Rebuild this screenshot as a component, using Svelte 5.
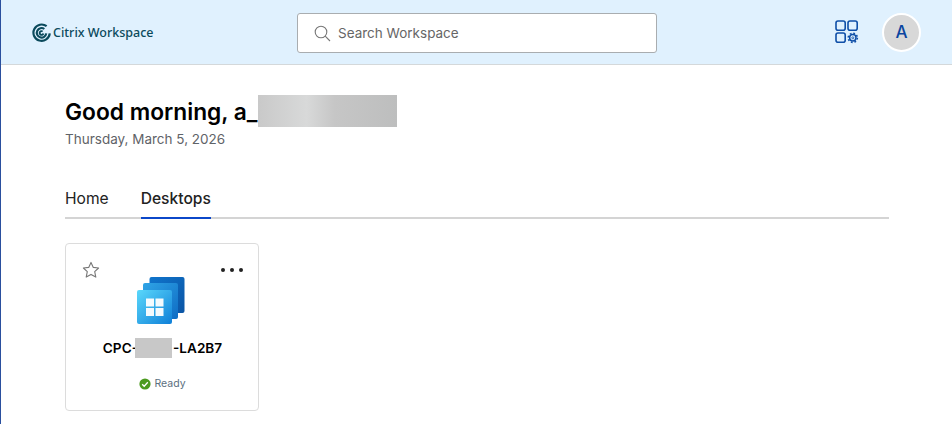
<script>
  const tabs = ['Home', 'Desktops'];
  let active = 'Desktops';
</script>

<div class="page">
  <header class="topbar">
    <div class="logo">
      <svg width="19" height="19" viewBox="0 0 20 20" fill="none" stroke="#0b4a5c">
        <path d="M15.4 3.4A8.6 8.6 0 1 0 18.7 11" stroke-width="2.3" />
        <path d="M13 6.300A5 5 0 1 0 15 11" stroke-width="2.200" />
        <path d="M11.200 8.900A2 2 0 1 0 12 11" stroke-width="2" />
      </svg>
      <span>Citrix Workspace</span>
    </div>
    <div class="search">
      <svg width="17" height="17" viewBox="0 0 17 17" fill="none" stroke="#777" stroke-width="1.1">
        <circle cx="7" cy="7" r="5.8" />
        <path d="M11.2 11.2L16 16" />
      </svg>
      <span>Search Workspace</span>
    </div>
    <div class="actions">
      <svg width="24" height="24" viewBox="0 0 24 24" fill="none" stroke="#0f4fa8" stroke-width="1.6">
        <rect x="1" y="1" width="9.2" height="9.2" rx="2" />
        <rect x="13" y="1" width="9.2" height="9.2" rx="2" />
        <rect x="1" y="13" width="9.2" height="9.2" rx="2" />
        <circle cx="17.8" cy="17.8" r="3.2" stroke-width="1.5" />
        <circle cx="17.8" cy="17.8" r="4.6" stroke-width="1.5" stroke-dasharray="1.8 1.8" />
        <circle cx="17.8" cy="17.8" r="1" stroke-width="0.8" />
      </svg>
      <div class="avatar">A</div>
    </div>
  </header>

  <main class="content">
    <h1 class="greeting">Good morning, a_<span class="blur-name"></span></h1>
    <p class="date">Thursday, March 5, 2026</p>

    <nav class="tabs">
      {#each tabs as tab}
        <div class="tab" class:active={tab === active}>{tab}</div>
      {/each}
    </nav>

    <div class="card">
      <div class="card-top">
        <svg width="18" height="18" viewBox="0 0 18 18" fill="none" stroke="#777" stroke-width="1.1" stroke-linejoin="round">
          <path d="M9 1.4l2.3 5 5.3.6-3.9 3.7 1.1 5.4L9 13.4l-4.8 2.7 1.1-5.4L1.4 7l5.3-.6z" />
        </svg>
        <div class="dots"><i></i><i></i><i></i></div>
      </div>
      <svg class="desktop-icon" width="48" height="48" viewBox="0 0 48 48">
        <defs>
          <linearGradient id="front" x1="0" y1="0" x2="1" y2="1">
            <stop offset="0" stop-color="#5ad8fb" />
            <stop offset="1" stop-color="#0f7fd8" />
          </linearGradient>
          <linearGradient id="mid" x1="0" y1="0" x2="1" y2="1">
            <stop offset="0" stop-color="#2fa4e6" />
            <stop offset="1" stop-color="#0e6cc4" />
          </linearGradient>
          <linearGradient id="back" x1="0" y1="0" x2="1" y2="1">
            <stop offset="0" stop-color="#0f74cc" />
            <stop offset="1" stop-color="#0b55a5" />
          </linearGradient>
        </defs>
        <rect x="12.5" y="0" width="35" height="36" rx="2" fill="url(#back)" />
        <rect x="6" y="6" width="35" height="36" rx="2" fill="url(#mid)" />
        <rect x="0" y="13" width="35" height="34" rx="2" fill="url(#front)" />
        <g fill="#fff" opacity="0.95">
          <rect x="9" y="21.5" width="8" height="8" />
          <rect x="18.5" y="21.5" width="8" height="8" />
          <rect x="9" y="31" width="8" height="8" />
          <rect x="18.5" y="31" width="8" height="8" />
        </g>
      </svg>
      <div class="card-name">CPC-<span class="blur-host"></span>-LA2B7</div>
      <div class="status">
        <svg width="12" height="12" viewBox="0 0 12 12">
          <circle cx="6" cy="6" r="5.6" fill="#4b9a1f" />
          <path d="M3.2 6.2l2 2 3.6-4" fill="none" stroke="#fff" stroke-width="1.3" />
        </svg>
        <span>Ready</span>
      </div>
    </div>
  </main>
</div>

<style>
  :global(body) {
    margin: 0;
    background: #fff;
  }

  .page {
    height: 424px;
    box-sizing: border-box;
    border-left: 1px solid #2a4f9e;
    font-family: "Inter", "Liberation Sans", sans-serif;
    overflow: hidden;
  }

  .topbar {
    height: 65px;
    box-sizing: border-box;
    display: flex;
    align-items: center;
    padding: 0 31px 0 31px;
    background: #e0f1fe;
    border-bottom: 1px solid #d4d8da;
  }

  .logo {
    width: 265px;
    display: flex;
    align-items: center;
    gap: 2px;
    font-family: "Noto Sans", sans-serif;
    font-size: 12.5px;
    font-weight: 500;
    color: #0b4a5c;
  }

  .search {
    width: 360px;
    height: 40px;
    box-sizing: border-box;
    margin-top: 2px;
    display: flex;
    align-items: center;
    gap: 7px;
    padding-left: 16px;
    background: #fff;
    border: 1px solid #a9adb0;
    border-radius: 3px;
    font-size: 13.5px;
    color: #666;
  }

  .actions {
    margin-left: auto;
    display: flex;
    align-items: center;
    gap: 23px;
  }

  .avatar {
    width: 39px;
    height: 39px;
    box-sizing: border-box;
    display: flex;
    align-items: center;
    justify-content: center;
    border: 2px solid #fff;
    border-radius: 50%;
    background: #d8d8d8;
    color: #0b45a0;
    font-size: 17px;
    font-weight: 500;
  }

  .content {
    padding: 30px 63px 0 64px;
  }

  .greeting {
    margin: 0;
    display: flex;
    align-items: center;
    height: 32px;
    font-size: 22.75px;
    font-weight: 600;
    color: #000;
  }

  .blur-name {
    width: 139px;
    height: 32px;
    background: linear-gradient(90deg, #c9c9c9, #d8d9d9 35%, #c6c6c6 55%, #bdbebe);
  }

  .date {
    margin: 3px 0 0;
    font-size: 13.5px;
    line-height: 18px;
    color: #5f6368;
  }

  .tabs {
    display: flex;
    gap: 32px;
    margin-top: 37px;
    border-bottom: 2px solid #d4d4d4;
  }

  .tab {
    height: 34px;
    box-sizing: border-box;
    margin-bottom: -2px;
    padding-top: 4px;
    font-size: 15.6px;
    line-height: 20px;
    color: #222;
  }

  .tab.active {
    border-bottom: 2px solid #0b47c9;
    font-weight: 500;
  }

  .card {
    width: 194px;
    height: 168px;
    box-sizing: border-box;
    margin-top: 24px;
    padding: 17px 15px 0 16px;
    display: flex;
    flex-direction: column;
    align-items: center;
    background: #fff;
    border: 1px solid #dcdcdc;
    border-radius: 4px;
  }

  .card-top {
    width: 100%;
    height: 18px;
    display: flex;
    align-items: center;
    justify-content: space-between;
  }

  .dots {
    display: flex;
    gap: 5px;
  }

  .dots i {
    width: 4px;
    height: 4px;
    border-radius: 50%;
    background: #222;
  }

  .desktop-icon {
    margin: -2px 0 0 -3px;
  }

  .card-name {
    margin-top: 13px;
    display: flex;
    align-items: center;
    height: 20px;
    font-size: 13.6px;
    font-weight: 600;
    color: #000;
  }

  .blur-host {
    width: 37px;
    height: 20px;
    margin: 0 1px 0 -3px;
    background: #c8c8c8;
  }

  .status {
    margin-top: 19px;
    display: flex;
    align-items: center;
    gap: 3px;
    font-size: 10.5px;
    color: #5b6f80;
  }
</style>
